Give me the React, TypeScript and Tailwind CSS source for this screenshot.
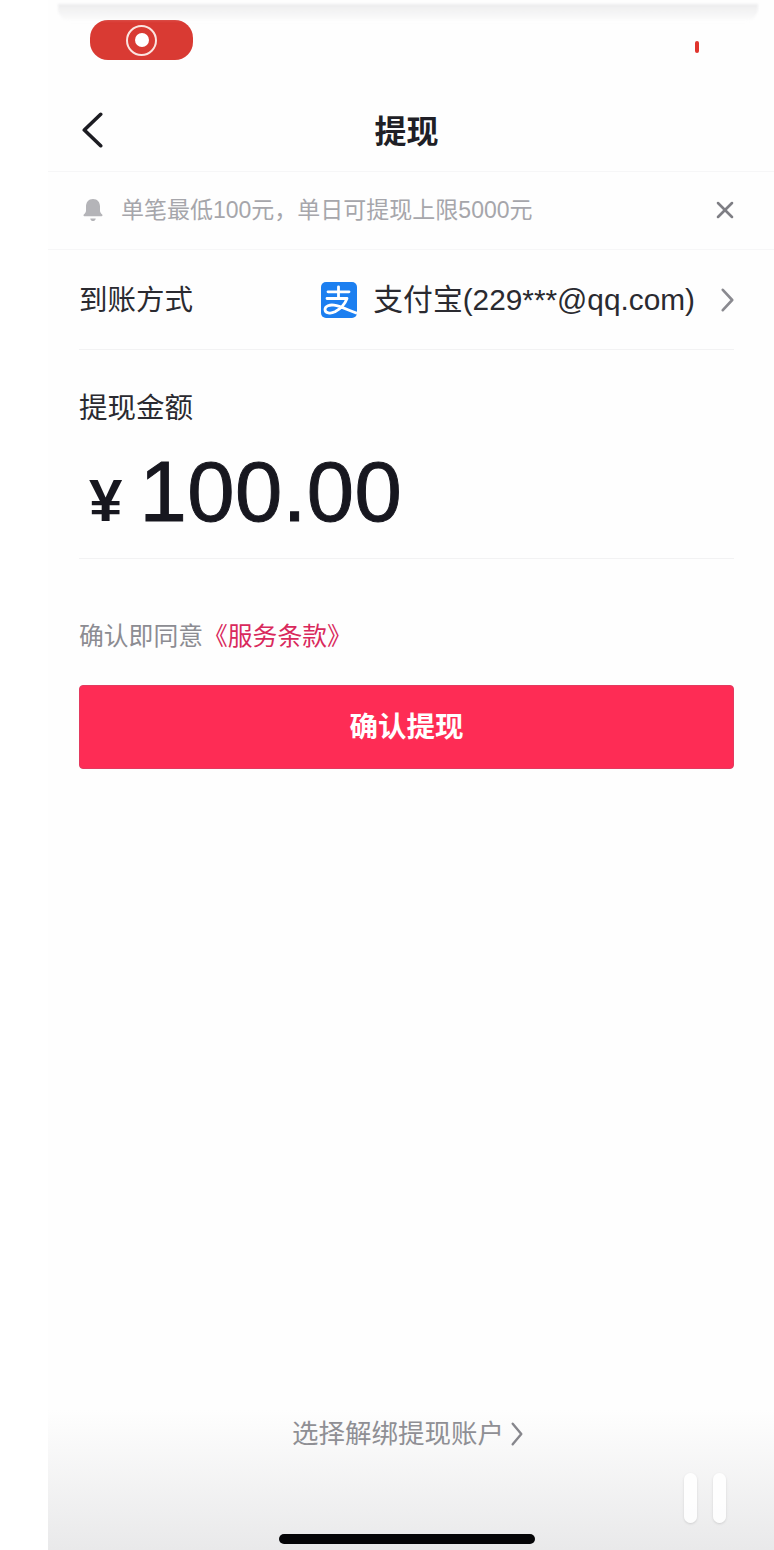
import { X } from "lucide-react";

const cjk = "font-['Liberation_Sans','Noto_Sans_CJK_SC',sans-serif]";

function Chevron({ width, height, color, stroke, flip = false }: { width: number; height: number; color: string; stroke: number; flip?: boolean }) {
  const pad = stroke / 2 + 0.5;
  const tip = flip ? pad : width - pad;
  const back = flip ? width - pad : pad;
  return (
    <svg width={width} height={height} viewBox={`0 0 ${width} ${height}`} fill="none" className="shrink-0">
      <path
        d={`M${back} ${pad}L${tip} ${height / 2}L${back} ${height - pad}`}
        stroke={color}
        strokeWidth={stroke}
        strokeLinecap="round"
        strokeLinejoin="round"
      />
    </svg>
  );
}

function BellIcon() {
  return (
    <svg width="24" height="26" viewBox="0 0 24 26" fill="#b4b4b8" className="shrink-0">
      <path d="M12 2c-4.6 0-7 3.4-7 7.6v4.2c0 1.6-1 2.7-2.200 3.800-.6.6-.3 1.600.6 1.600h17.200c.9 0 1.200-1 .6-1.600-1.200-1.100-2.200-2.200-2.200-3.800V9.600C19 5.400 16.600 2 12 2z" />
      <path d="M9.300 21.400h5.400c0 1.500-1.200 2.600-2.700 2.600s-2.700-1.100-2.700-2.600z" />
    </svg>
  );
}

function AlipayIcon() {
  return (
    <svg width="36" height="36" viewBox="0 0 36 36" className="shrink-0">
      <defs>
        <clipPath id="alipay-tile">
          <rect width="36" height="36" rx="5" />
        </clipPath>
      </defs>
      <rect width="36" height="36" rx="5" fill="#1c7ff0" />
      <g clipPath="url(#alipay-tile)" fill="none" stroke="#fff" strokeWidth="2.800" strokeLinecap="round" strokeLinejoin="round">
        <path d="M7 9.800h21" />
        <path d="M17.500 4.800v11.400" />
        <path d="M6 16.500h20c-2 5.500-6 10-12 13.300-4.500 2.200-10 1.500-10-2.300 0-3.500 5-5 9-4.300 7.500 1.300 15 5.300 24 8.300" />
      </g>
    </svg>
  );
}

export default function App() {
  return (
    <div className={`relative h-[1550px] w-[774px] overflow-hidden bg-white pl-12 ${cjk}`}>
      <div className="relative flex h-full flex-col bg-[#fefefe]">
        {/* status bar */}
        <div className="flex h-[100px] shrink-0 items-start justify-between pl-[42px] pr-[75px] pt-[20px]">
          <div className="flex h-[40px] w-[103px] items-center justify-center rounded-[18px] bg-[#d93a33]">
            <div className="flex h-[31px] w-[31px] items-center justify-center rounded-full border-[2.5px] border-[#fbe4e0]">
              <div className="h-[14px] w-[14px] rounded-full bg-white" />
            </div>
          </div>
          <div className="mt-[21px] h-[12px] w-[4px] rounded-full bg-[#e0352d]" />
        </div>

        {/* nav bar */}
        <div className="relative flex h-[72px] shrink-0 items-center justify-center border-b border-[#f6f6f7] pb-[8px] pl-[31px] pr-[40px]">
          <div className="absolute left-[34px] top-[12px]">
            <Chevron width={21} height={36} color="#1c1c22" stroke={3.6} flip />
          </div>
          <h1 className="text-[32px] font-bold leading-none text-[#1f1f26]">提现</h1>
        </div>

        {/* notice */}
        <div className="flex h-[78px] shrink-0 items-center border-b border-[#f6f6f7] pb-[1px] pl-[33px] pr-[35px]">
          <BellIcon />
          <span className="ml-[16px] text-[23px] leading-none text-[#a6a6ab]">单笔最低100元，单日可提现上限5000元</span>
          <X className="ml-auto text-[#7e7e84]" size={28} strokeWidth={2.2} />
        </div>

        <div className="flex flex-col pl-[31px] pr-[40px]">
          {/* payout account */}
          <div className="flex h-[100px] items-center justify-between border-b border-[#f2f2f3]">
            <span className="pt-[2px] text-[28.500px] leading-none text-[#2a2a30]">到账方式</span>
            <div className="flex items-center">
              <AlipayIcon />
              <span className="ml-[16px] text-[29.8px] leading-none text-[#2a2a30]">支付宝(229***@qq.com)</span>
              <div className="ml-[26px]">
                <Chevron width={13} height={24} color="#8a8a90" stroke={2.6} />
              </div>
            </div>
          </div>

          {/* amount */}
          <div className="flex h-[209px] flex-col border-b border-[#f2f2f3] pt-[41px]">
            <span className="text-[28.500px] leading-[34px] text-[#2a2a30]">提现金额</span>
            <div className="mt-[25px] flex items-baseline">
              <span className="ml-[10px] text-[60px] font-bold leading-none text-[#17171f]">¥</span>
              <span className="ml-[17px] text-[85px] leading-[84px] tracking-[0.5px] text-[#17171f] [-webkit-text-stroke:1px_#17171f]">100.00</span>
            </div>
          </div>

          <p className="mt-[62px] text-[24.800px] leading-[32px] text-[#8c8c92]">
            确认即同意<span className="text-[#d9295c]">《服务条款》</span>
          </p>

          <button type="button" className="mt-[32px] flex h-[84px] w-full items-center justify-center rounded-[4px] border border-[#e33a5f] bg-[#fe2c55] text-[28.500px] font-bold text-white">
            确认提现
          </button>
        </div>

        {/* footer */}
        <div className="relative mt-auto flex h-[140px] shrink-0 justify-center bg-gradient-to-b from-[#fefefe] to-[#e9e9ea] pt-[8px] pr-[7px]">
          <div className="flex h-[32px] items-center">
            <span className="text-[26.500px] leading-none text-[#8f8f94]">选择解绑提现账户</span>
            <div className="ml-[7px]">
              <Chevron width={12} height={24} color="#86868c" stroke={2.4} />
            </div>
          </div>
          <div className="absolute bottom-[6px] left-[231px] h-[10px] w-[256px] rounded-full bg-[#050507]" />
          <div className="absolute bottom-[27px] left-[636px] flex gap-[16px]">
            <div className="h-[50px] w-[13px] rounded-full bg-white/90 shadow-sm" />
            <div className="h-[50px] w-[13px] rounded-full bg-white/90 shadow-sm" />
          </div>
        </div>
      </div>

      {/* soft shadow of the sheet above */}
      <div className="absolute left-[58px] top-[4px] h-[18px] w-[700px] rounded-b-[14px] bg-gradient-to-b from-[#ececed] to-transparent blur-[1px]" />
    </div>
  );
}
